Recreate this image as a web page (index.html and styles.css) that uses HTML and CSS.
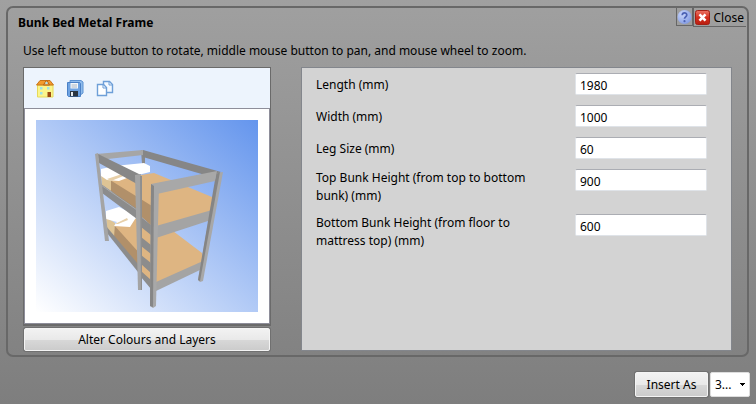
FILE: index.html
```html
<!DOCTYPE html>
<html lang="en">
<head>
    <meta charset="UTF-8">
    <meta name="viewport" content="width=device-width, initial-scale=1.0">
    <title>Bunk Bed Metal Frame</title>
    <link rel="stylesheet" href="styles.css">
</head>
<body>
    <main class="dialog">
        <header class="dialog-header">
            <h1>Bunk Bed Metal Frame</h1>
            <div class="header-buttons">
                <button class="help" aria-label="Help">
                    <svg width="15" height="16" viewBox="0 0 15 16">
                        <defs>
                            <radialGradient id="help-fill" cx="0.35" cy="0.3" r="0.8">
                                <stop offset="0" stop-color="#c9d6fa"/>
                                <stop offset="1" stop-color="#7f98e2"/>
                            </radialGradient>
                        </defs>
                        <circle cx="7.5" cy="8" r="7" fill="url(#help-fill)"/>
                        <path d="M5.2 6.2C5.3 3.2 9.8 3.2 9.8 6C9.8 7.8 7.6 7.9 7.5 9.8" fill="none" stroke="#4c62b4" stroke-width="1.7"/>
                        <circle cx="7.5" cy="12.2" r="1.1" fill="#4c62b4"/>
                    </svg>
                </button>
                <button class="close">
                    <svg width="15" height="15" viewBox="0 0 15 15">
                        <defs>
                            <linearGradient id="close-fill" x1="0" y1="0" x2="0" y2="1">
                                <stop offset="0" stop-color="#ea7566"/>
                                <stop offset="0.5" stop-color="#d5301e"/>
                                <stop offset="1" stop-color="#b81d10"/>
                            </linearGradient>
                        </defs>
                        <rect x="0.5" y="0.5" width="14" height="14" rx="2" fill="url(#close-fill)" stroke="#a32014"/>
                        <path d="M4.5 4.3L10.5 10.7M10.5 4.3L4.5 10.7" stroke="#fff" stroke-width="2.6"/>
                    </svg>
                    <span>Close</span>
                </button>
            </div>
        </header>
        <p class="hint">Use left mouse button to rotate, middle mouse button to pan, and mouse wheel to zoom.</p>

        <div class="content">
            <section class="preview">
                <div class="viewer">
                    <div class="toolbar">
                        <button aria-label="Home view">
                            <svg width="18" height="20" viewBox="0 0 18 20">
                                <path d="M1.5 7H17V19H1.5Z" fill="#fbf58c" stroke="#e6d95a"/>
                                <path d="M0.5 7L4 2.5H14L17.5 7Z" fill="#f29a2e" stroke="#c87418"/>
                                <path d="M7.5 7L10.5 2L13.5 7Z" fill="#e8b060" stroke="#b8651a"/>
                                <rect x="9.5" y="4" width="2" height="2" fill="#a9dfee"/>
                                <path d="M4 9H6.5V11.5H4ZM11 9H13.5V11.5H11ZM4 14H6.5V16.5H4Z" fill="#9fe2e6"/>
                                <rect x="11.5" y="14" width="3.5" height="5" fill="#9c4a12"/>
                            </svg>
                        </button>
                        <button aria-label="Save">
                            <svg width="18" height="20" viewBox="0 0 18 20">
                                <path d="M4 2.5H15L17 4V15L15 16.5H4Z" fill="#8fbbec" stroke="#5d92d2"/>
                                <path d="M1.5 4.5H13.5L14.5 5.5V18.5H2.5L1.5 17.5Z" fill="#6fa3e2" stroke="#4a80c6"/>
                                <rect x="4.5" y="5" width="7.5" height="5.5" fill="#f4f7fa"/>
                                <path d="M5.5 7H11M5.5 9H11" stroke="#aab6c4"/>
                                <rect x="4" y="13" width="8" height="5.5" fill="#2b3541"/>
                                <rect x="5" y="14" width="2" height="4" fill="#e5e9ee"/>
                            </svg>
                        </button>
                        <button aria-label="Copy">
                            <svg width="18" height="20" viewBox="0 0 18 20">
                                <path d="M7.5 3.5H13.5L16.5 6.5V14.5H7.5Z" fill="#f4f9ff" stroke="#6e9fd8" stroke-width="1.4"/>
                                <path d="M13 3.5V7H16.5" fill="none" stroke="#6e9fd8"/>
                                <path d="M1.5 6.5H7.5L10.5 9.5V17.5H1.5Z" fill="#fff" stroke="#6e9fd8" stroke-width="1.4"/>
                                <path d="M7 6.5V10H10.5" fill="none" stroke="#6e9fd8"/>
                            </svg>
                        </button>
                    </div>
                    <div class="stage">
                        <svg class="scene" viewBox="36 120 222 192" role="img" aria-label="3D view of the bunk bed">
                            <defs>
                                <linearGradient id="sky" x1="0" y1="1" x2="1" y2="0">
                                    <stop offset="0" stop-color="#ffffff"/>
                                    <stop offset="1" stop-color="#6495ed"/>
                                </linearGradient>
                            </defs>
                            <rect x="36" y="120" width="222" height="192" fill="url(#sky)"/>

                            <!-- back frame -->
                            <path d="M141 150L145 151V166L142 164Z" fill="#8a8a8a"/>
                            <path d="M96 154L143 150V155L99 160Z" fill="#a6a6a6"/>
                            <path d="M143 150L221 172L212 177L143 157Z" fill="#868686"/>

                            <!-- lower bunk -->
                            <path d="M115 226L134 218L173 231L202 253V263L156 283L141 274Z" fill="#deb582"/>
                            <path d="M114 225L142 256V273L114 238Z" fill="#b1906a"/>
                            <path d="M106 217L115 223L114 238L107 229Z" fill="#dec495"/>
                            <path d="M106 211L119 207L137 216L130 227L114 226L117 222L106 219Z" fill="#fff"/>
                            <path d="M115 224L127 218L128 220L118 224Z" fill="#e7cfa8"/>
                            <path d="M106 226L138 264V272L107 233Z" fill="#8c8c8c"/>

                            <!-- upper bunk -->
                            <path d="M110 180L128 177L154 173L212 197V212L157 228L150 218Z" fill="#deb582"/>
                            <path d="M110 180L152 206V226L110 190Z" fill="#b1906a"/>
                            <path d="M101 174L111 180V191L102 185Z" fill="#dec495"/>
                            <path d="M101 169L110 167L124 165L144 163L150 166V172L134 176L127 178L119 181L107 180L101 176Z" fill="#fff"/>
                            <path d="M107 179L122 174L126 175L111 181Z" fill="#e7cfa8"/>
                            <path d="M101 184L137 209V219L102 193Z" fill="#8c8c8c"/>
                            <path d="M98 154L141 175L137 184L99 163Z" fill="#878787"/>
                            <path d="M101 185L137 210" fill="none" stroke="#aaa"/>
                            <path d="M95 154L98 153L109 241H105Z" fill="#a4a4a4"/>

                            <!-- ladder -->
                            <path d="M141 217L151 225V235L141 227ZM141 237L151 245V254L141 246ZM141 255L151 263V273L141 264ZM141 271L151 280V289L141 277Z" fill="#8c8c8c"/>
                            <path d="M135 175L141 174L142 290H138Z" fill="#a4a4a4"/>
                            <path d="M140 176H142V290H141Z" fill="#8f8f8f"/>

                            <!-- front frame -->
                            <path d="M156 226L212 210L211 220L156 238Z" fill="#a4a4a4"/>
                            <path d="M156 282L203 261L202 269L156 291Z" fill="#a4a4a4"/>
                            <path d="M217 173L223 172L203 281L200 282L198 280Z" fill="#a8a8a8"/>
                            <path d="M216 174L220 172L200 281L198 280Z" fill="#858585"/>
                            <path d="M151 184L217 171L215 181L157 194Z" fill="#a8a8a8"/>
                            <path d="M151 184L159 185L156 306L153 308L150 306Z" fill="#a8a8a8"/>
                            <path d="M151 184L154 186L153 307L150 306Z" fill="#868686"/>
                        </svg>
                    </div>
                </div>
                <button class="btn alter">Alter Colours and Layers</button>
            </section>

            <form class="params">
                <div class="row">
                    <label for="length">Length (mm)</label>
                    <input type="text" id="length" value="1980">
                </div>
                <div class="row">
                    <label for="width">Width (mm)</label>
                    <input type="text" id="width" value="1000">
                </div>
                <div class="row">
                    <label for="leg">Leg Size (mm)</label>
                    <input type="text" id="leg" value="60">
                </div>
                <div class="row">
                    <label for="top-height">Top Bunk Height (from top to bottom bunk) (mm)</label>
                    <input type="text" id="top-height" value="900">
                </div>
                <div class="row">
                    <label for="bottom-height">Bottom Bunk Height (from floor to mattress top) (mm)</label>
                    <input type="text" id="bottom-height" value="600">
                </div>
            </form>
        </div>
    </main>

    <footer class="actions">
        <button class="btn insert">Insert As</button>
        <select class="format" aria-label="Insert format">
            <option>3...</option>
        </select>
    </footer>
</body>
</html>
```
FILE: styles.css
```css
* {
    box-sizing: border-box;
}

body {
    margin: 0;
    padding: 6px;
    min-height: 100vh;
    font-family: "Noto Sans", "Open Sans", sans-serif;
    font-size: 12px;
    line-height: 18px;
    color: #000;
    background: linear-gradient(#a0a0a0, #7e7e7e);
}

button,
input,
select {
    font: inherit;
    color: inherit;
}

button {
    padding: 0;
    border: none;
    background: none;
    cursor: pointer;
}

svg {
    display: block;
}

.dialog {
    border: 2px solid #686868;
    border-radius: 7px;
    padding: 0 15px 4px;
    margin-right: 1px;
}

.dialog-header {
    display: flex;
    justify-content: space-between;
    height: 34px;
    margin: 0 -14px 0 -5px;
}

.dialog-header h1 {
    margin: 6px 0 0;
    font-size: 12px;
    font-weight: bold;
}

.header-buttons {
    display: flex;
    align-items: flex-start;
}

.help,
.close {
    display: flex;
    align-items: center;
    height: 18px;
    border: 1px solid #666;
    border-top: none;
}

.close {
    gap: 4px;
    height: 19px;
    padding: 0 2px 0 1px;
    border-right: none;
}

.close span {
    padding-top: 2px;
}

.hint {
    margin: 0 0 7px;
}

.content {
    display: flex;
    gap: 30px;
}

.preview {
    flex: 0 0 248px;
}

.viewer {
    border: 1px solid #6a6a6a;
    border-bottom-width: 2px;
    margin-bottom: 2px;
    background: #8a8a8a;
}

.toolbar {
    display: flex;
    gap: 12px;
    padding: 9px 12px;
    height: 40px;
    background: #edf4fd;
}

.stage {
    padding: 11px;
    border: 1px solid #8e8e9a;
    background: #fff;
}

.scene {
    width: 100%;
}

.btn {
    height: 23px;
    border: 1px solid #f4f4f4;
    border-radius: 2px;
    box-shadow: 0 0 0 1px #707070;
    background: linear-gradient(#f2f2f2, #e9e9e9 50%, #d8d8d8 51%, #cccccc);
}

.alter {
    display: block;
    width: calc(100% - 2px);
    margin: 0 auto;
}

.params {
    flex: 1;
    padding: 0 24px 0 14px;
    border: 1px solid #83868c;
    background: #d3d3d3;
}

.row {
    display: flex;
    align-items: center;
    padding-bottom: 9px;
}

.row:first-child {
    margin-top: 5px;
}

.row label {
    flex: 1;
    padding-right: 30px;
}

.row input {
    align-self: flex-start;
    width: 132px;
    height: 22px;
    margin-bottom: 1px;
    padding: 2px 4px 0;
    border: 1px solid #dfe3e8;
    border-top-color: #abadb3;
    border-radius: 2px;
    background: #fff;
}

.actions {
    display: flex;
    justify-content: flex-end;
    gap: 2px;
    margin-top: 15px;
}

.insert {
    width: 73px;
    height: 25px;
}

.format {
    width: 40px;
    height: 25px;
    padding: 0 4px;
    border: 1px solid #ddd;
    border-radius: 2px;
    appearance: none;
    background: #fff;
    background-image: linear-gradient(#000, #000), linear-gradient(#000, #000), linear-gradient(#000, #000);
    background-repeat: no-repeat;
    background-size: 5px 1px, 3px 1px, 1px 1px;
    background-position: 29px 10px, 30px 11px, 31px 12px;
}
```
